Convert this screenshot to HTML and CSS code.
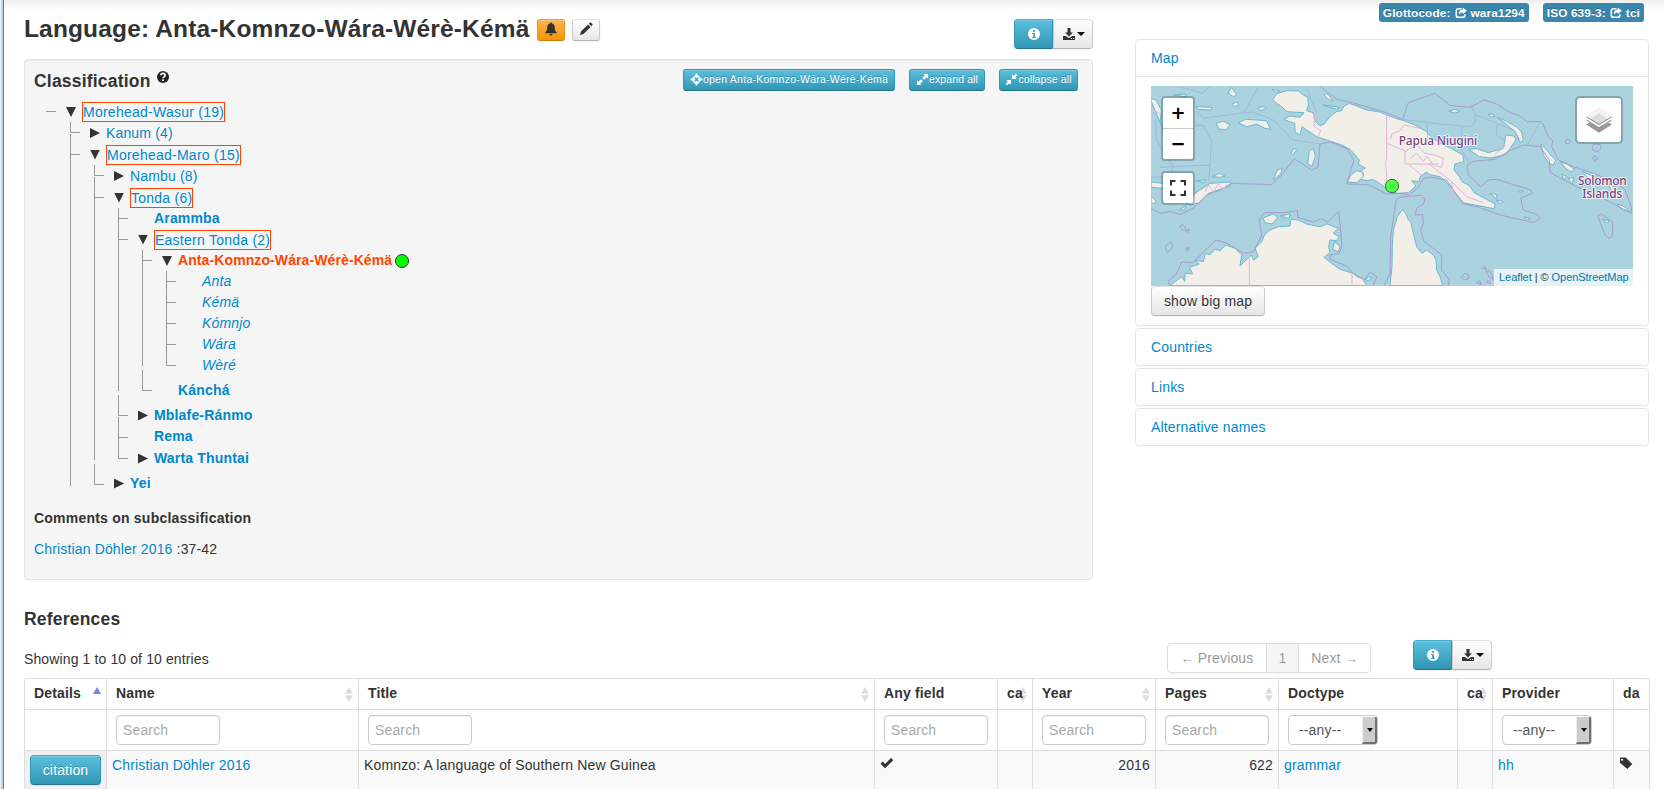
FILE: index.html
```html
<!DOCTYPE html>
<html lang="en">
<head>
<meta charset="utf-8">
<title>Language: Anta-Komnzo-Wára-Wérè-Kémä</title>
<link rel="stylesheet" href="styles.css">
</head>
<body>
<svg width="0" height="0" class="defs">
  <symbol id="i-bell" viewBox="0 0 14 14"><path d="M7 0.5c.7 0 1 .4 1 .9 1.900.5 2.800 2 2.800 4 0 2.600.6 3.800 2 5v.9H1.200v-.9c1.400-1.200 2-2.400 2-5 0-2 .9-3.500 2.800-4 0-.5.3-.9 1-.9zM5.500 12h3c0 1-.6 1.500-1.500 1.500S5.500 13 5.500 12z"/></symbol>
  <symbol id="i-pencil" viewBox="0 0 14 14"><path d="M1 13l1-3.500L9 2.500 11.500 5 4.500 12zM9.800 1.700L11 .6q.5-.4 1 0L13.400 2q.4.500 0 1L12.300 4.200z"/></symbol>
  <symbol id="i-info" viewBox="0 0 14 14"><path fill-rule="evenodd" d="M7 1a6 6 0 1 0 0 12A6 6 0 0 0 7 1zM6 3h2v2H6zM5 6h3v4h1v1H5v-1h1V7H5z"/></symbol>
  <symbol id="i-help" viewBox="0 0 14 14"><circle cx="7" cy="7" r="6"/><path d="M4.900 5.300Q5 3.400 7 3.400T9.100 5.200Q9.100 6.200 8 6.900 7.100 7.400 7.100 8.300" fill="none" stroke="#fff" stroke-width="1.700"/><path fill="#fff" d="M6.200 9.300h1.800v1.800H6.200z"/></symbol>
  <symbol id="i-down" viewBox="0 0 14 14"><path fill-rule="evenodd" d="M5.500 1h3v4.500H11L7 9.500 3 5.500h2.500zM1 9h3l2 1.700h2L10 9h3v4H1zM9 11v1h1v-1zm2 0v1h1v-1z"/></symbol>
  <symbol id="i-target" viewBox="0 0 14 14"><circle cx="7" cy="7" r="3.700" fill="none" stroke="currentColor" stroke-width="1.500"/><path d="M7 0l2 2.700H8V5.500H6V2.700H5zM7 14l2-2.700H8V8.500H6v2.800H5zM0 7l2.700-2v1h2.800v2H2.700v1zM14 7l-2.700-2v1H8.500v2h2.800v1z"/></symbol>
  <symbol id="i-expand" viewBox="0 0 14 14"><path d="M8 1h5v5L11.500 4.500 8.700 7.300 6.700 5.300 9.500 2.500zM6 13H1V8l1.500 1.500L5.300 6.700 7.300 8.700 4.500 11.500z"/></symbol>
  <symbol id="i-collapse" viewBox="0 0 14 14"><path d="M13.300 2.500L11.500.7 9.200 3 7.500 1.300V6.500h5.200L11 4.800zM.7 11.500L2.500 13.300 4.800 11 6.500 12.700V7.500H1.300L3 9.200z"/></symbol>
  <symbol id="i-share" viewBox="0 0 14 14"><path d="M7.500 2H4Q1.500 2 1.500 4.500v5Q1.500 12 4 12h5q2.500 0 2.500-2.500V8.500" fill="none" stroke="currentColor" stroke-width="1.800"/><path d="M9 .5l4.800 4L9 8.500V6Q6 5.800 5 9 3.600 3.500 9 3z"/></symbol>
  <symbol id="i-ok" viewBox="0 0 14 14"><path d="M.5 7.800L2.700 5.600 5 7.900 11 2l2.300 2.200L5 12.300z"/></symbol>
  <symbol id="i-tag" viewBox="0 0 14 14"><path fill-rule="evenodd" d="M1 1.500h5.500L13.300 8 8.300 13 1 6.800zM3 2.800a1 1 0 1 0 .1 0z"/></symbol>
</svg>
<div class="page">
  <div class="top">
    <main class="left">
      <div class="head">
        <h2>Language: Anta-Komnzo-Wára-Wérè-Kémä</h2>
        <a class="btn small warning"><svg class="ic"><use href="#i-bell"/></svg></a>
        <a class="btn small"><svg class="ic"><use href="#i-pencil"/></svg></a>
        <div class="group"><a class="btn info"><svg class="ic"><use href="#i-info"/></svg></a><a class="btn"><svg class="ic"><use href="#i-down"/></svg><i class="caret"></i></a></div>
      </div>
      <section class="well">
        <div class="wellhead">
          <h3>Classification</h3><svg class="ic help"><use href="#i-help"/></svg>
          <div class="mini-row">
            <a class="mini b1"><svg><use href="#i-target"/></svg><span>open Anta-Komnzo-Wára-Wérè-Kémä</span></a>
            <a class="mini b2"><svg><use href="#i-expand"/></svg><span>expand all</span></a>
            <a class="mini b3"><svg><use href="#i-collapse"/></svg><span>collapse all</span></a>
          </div>
        </div>
        <div class="tree">
          <svg class="lines" width="200" height="400" viewBox="25 100 200 400"><path d="M46 111.500h10M70.500 122v10.500h9.500M70.500 134v352M70.500 154.500h9.500M94.500 165v10.500h9.500M94.500 177v283M94.500 197.500h9.500M94.500 464v20.500h9.500M118.500 208v183M118.500 218.500h9.500M118.500 239.500h9.500M118.500 395v20.500h9.500M118.500 417v41.500h9.500M118.500 437.500h9.500M142.500 250v116M142.500 260.500h9.500M142.500 370v20.500h9.500M166.500 271v94.500h9.500M166.500 281.500h9.500M166.500 302.500h9.500M166.500 323.500h9.500M166.500 344.500h9.500"/></svg>
          <div class="r l0 h22"><i class="dn"></i><a class="box">Morehead-Wasur (19)</a></div>
          <div class="r l1 h20"><i class="rt"></i><a>Kanum (4)</a></div>
          <div class="r l1 h23"><i class="dn"></i><a class="box">Morehead-Maro (15)</a></div>
          <div class="r l2 h20"><i class="rt"></i><a>Nambu (8)</a></div>
          <div class="r l2 h23"><i class="dn"></i><a class="box">Tonda (6)</a></div>
          <div class="r l3 h19"><i></i><a class="b">Arammba</a></div>
          <div class="r l3 h23"><i class="dn"></i><a class="box">Eastern Tonda (2)</a></div>
          <div class="r l4 h20"><i class="dn"></i><a class="b cur">Anta-Komnzo-Wára-Wérè-Kémä</a><svg class="dot" viewBox="0 0 14 14"><circle cx="7" cy="7" r="6.500"/></svg></div>
          <div class="r l5"><i></i><a class="it">Anta</a></div>
          <div class="r l5"><i></i><a class="it">Kémä</a></div>
          <div class="r l5"><i></i><a class="it">Kómnjo</a></div>
          <div class="r l5"><i></i><a class="it">Wára</a></div>
          <div class="r l5"><i></i><a class="it">Wèré</a></div>
          <div class="r l4 gap"><i></i><a class="b">Kánchá</a></div>
          <div class="r l3 gap"><i class="rt"></i><a class="b">Mblafe-Ránmo</a></div>
          <div class="r l3 h22"><i></i><a class="b">Rema</a></div>
          <div class="r l3"><i class="rt"></i><a class="b">Warta Thuntai</a></div>
          <div class="r l2 gap"><i class="rt"></i><a class="b">Yei</a></div>
        </div>
        <h4>Comments on subclassification</h4>
        <p><a>Christian Döhler 2016</a> :37-42</p>
      </section>
    </main>
    <aside class="right">
      <div class="labels"><span class="label">Glottocode: <svg><use href="#i-share"/></svg> wara1294</span><span class="label">ISO 639-3: <svg><use href="#i-share"/></svg> tci</span></div>
      <div class="acc"><a class="acch">Map</a>
        <div class="inner">
          <div class="map">
            <svg class="mapsvg" width="482" height="200" viewBox="33 18 1446 600">
              <g class="land">
                <path d="M398 58L412 40 440 32 475 33 490 45 503 52 505 75 500 92 520 98 524 122 540 138 552 132 570 110 590 95 605 92 612 78 628 70 650 78 680 90 720 96 740 105 770 116 792 122 825 135 860 155 875 172 900 190 935 206 968 225 972 245 945 252 942 270 958 290 966 305 990 318 1002 338 1040 358 1066 372 1062 386 1020 378 970 368 955 350 925 312 900 290 870 284 860 276 840 290 838 305 815 302 828 318 805 338 775 340 750 335 722 312 700 299 678 302 660 296 672 282 662 272 676 264 655 252 658 240 630 208 605 195 560 180 530 170 500 150 487 140 480 165 465 155 464 130 430 118 450 108 480 112 492 98 470 97 440 95 425 80 410 70Z"/>
                <path d="M622 306L632 286 650 272 668 276 670 290 650 308Z"/>
                <path d="M90 617L125 590 134 604 136 580 158 582 148 562 178 552 166 540 190 545 196 520 210 524 225 508 240 512 258 495 285 505 305 525 300 558 318 540 335 525 340 540 355 530 345 505 365 485 375 462 390 450 415 440 450 438 452 418 475 420 500 432 540 440 562 432 595 445 580 460 598 470 590 482 570 480 566 500 570 518 552 532 575 550 600 568 640 580 668 596 680 617Z"/>
                <path d="M750 617L756 560 757 500 760 450 772 410 788 388 800 405 805 420 812 425 820 460 830 500 845 520 860 510 880 525 888 540 890 570 900 590 908 617Z"/>
                <path d="M33 55L48 60 64 90 60 125 70 150 33 62ZM33 306L70 310 68 325 33 322ZM33 348L48 362 44 372 33 368ZM140 370L165 340 210 310 272 306 270 318 205 340 178 368 150 375Z"/>
                <path d="M228 130L250 124 270 134 260 148 238 148ZM294 128L318 118 380 122 392 148 375 145 350 132 320 140ZM168 80L215 82 214 90 174 88ZM355 82L372 80 380 86 360 92ZM264 40L275 22 290 45 280 50ZM396 28L420 32 408 38ZM275 72L290 66 298 76 285 80ZM400 300L412 270 426 264 422 282ZM503 252L508 212 520 205 526 230 516 258ZM452 220L462 205 470 210 458 225ZM216 290L238 280 255 288 240 292ZM168 302L198 300 192 308ZM368 414L400 402 414 412 396 432 376 428ZM420 408L450 402 448 416ZM118 390L138 376 134 390ZM100 45L135 42 138 50ZM552 45L560 40 580 62 565 58ZM550 75L598 82 590 88ZM578 508L584 485 600 500 594 515ZM676 598L688 590 694 594 684 603Z"/>
                <path d="M986 208L1010 206 1045 218 1072 210 1090 205 1098 165 1122 168 1128 180 1115 198 1098 224 1050 234 1018 230ZM1072 112L1100 124 1130 142 1144 154 1150 180 1140 188 1126 155 1095 130ZM926 94L945 88 960 94 945 99ZM1045 103L1060 102 1063 111 1050 110ZM1203 192L1215 205 1232 225 1247 240 1240 256 1225 248 1210 225ZM1262 246L1280 252 1304 268 1292 275 1275 264ZM1326 274L1352 286 1370 300 1362 302 1340 290ZM1408 304L1426 330 1418 340 1408 318ZM1430 372L1450 378 1468 394 1450 392ZM1266 282L1280 290 1270 300ZM1284 296L1302 292 1296 312ZM1050 340L1072 344 1068 356ZM1068 360L1090 364 1082 372ZM1134 334L1150 332 1142 338ZM1152 410L1172 416 1162 420ZM1386 418L1408 422 1402 430Z"/>
              </g>
              <g class="eez">
                <path d="M33 386L65 400 90 394 120 404 160 384 200 346 240 330 275 310 395 314 425 285 463 236 515 270 534 262 540 192 572 186 620 206 642 240 620 312 685 314 740 342 780 340 808 345 835 322 850 295 875 292 920 300 950 345 970 372 1010 380 1085 406 1180 428 1202 414 1190 403 1150 390 1142 354 1178 340 1172 330 1070 298 1045 300 1022 320 985 285 982 255 1000 244 1065 238 1110 212 1150 195 1200 200 1228 240 1230 276 1245 286 1310 320 1400 360 1474 400 1474 382 1456 332 1435 310 1360 280 1300 260 1255 240 1235 200 1238 182 1225 170 1205 124 1162 126 1140 108 1110 98 1070 72 1032 60 990 82 930 76 886 40 805 68 788 118 740 98 630 66 590 58 540 18"/>
                <path d="M88 617L86 600 108 584 125 546 158 548 190 516 228 480 262 490 310 520 340 515 365 468 358 420 372 398 430 398 472 392 474 412 520 426 545 416 562 426 596 394 600 430 606 500 598 520 570 525 570 538 620 558 650 590 675 598 690 576 710 590 700 617M732 617L750 580 752 470 768 362 775 352 845 346 855 358 850 372 830 385 826 405 848 404 850 430 842 450 852 484 905 525 905 570 928 600 925 617"/>
                <path d="M76 500L90 485 98 492 96 506 82 517ZM118 440L128 434 138 444 130 452ZM136 452L148 448 142 458ZM138 504h10l-5 10zM1374 410L1384 402 1418 426 1418 465 1408 476 1394 464ZM1356 200L1362 192 1380 194 1384 204 1374 215 1360 211ZM1276 183L1284 177 1292 183 1288 190 1278 190ZM1357 234L1365 227 1373 236 1364 242ZM965 590L973 581 985 583 987 594 974 600ZM1027 565L1034 558 1040 570ZM1010 608L1020 602 1024 614ZM1038 575L1050 572 1060 598 1048 592ZM1038 605L1046 600 1052 612Z"/>
              </g>
              <path class="thin" d="M110 18L188 40 208 20M355 20L312 98 190 115 170 95M165 136H190L214 180 210 255 100 260 50 180 45 120M312 98L340 96 400 120 458 180 520 188 540 192M500 25L528 95M210 255L206 300M788 118L900 132 990 140 1005 128V100L992 75M1005 104L1120 150 1140 180M862 130V180M965 138V210L985 245M965 200H1000M1200 125L1162 195M1072 135L1068 165 1098 185M60 262L100 260 90 290 33 292"/>
              <path class="prov" d="M740 105V235L737 250 742 320M328 520V617M636 580V617M524 100L522 138 542 152 528 185M740 190L795 212V252H895M795 215L830 195 855 220 885 225 910 235 905 262 880 255 860 228 850 245 830 220 810 235M752 178L755 162 780 152 792 135 840 145M808 255L850 290M865 250L935 305 980 350 1030 368M935 305L940 350M1065 222L1100 195M33 85L65 105M195 335L205 315 220 335 235 312 250 328 262 312"/>
              <g class="maplabel"><text x="894" y="195" textLength="236">Papua Niugini</text><text x="1387" y="314" textLength="146">Solomon</text><text x="1387" y="354" textLength="120">Islands</text></g>
              <circle cx="756" cy="318" r="20" class="mark"/>
            </svg>
            <div class="zoomc"><b>+</b><b>−</b></div>
            <div class="full"><svg width="16" height="16" viewBox="0 0 16 16"><path d="M1 5.500V1h4.500M10.500 1H15v4.500M15 10.500V15h-4.500M5.500 15H1v-4.500"/></svg></div>
            <div class="layers"><svg width="26" height="26" viewBox="0 0 26 26"><path fill="#9a9a9a" d="M0 17.500l13 8.300 13-8.300-3.500-2L13 21l-9.500-5.500z"/><path fill="#898989" d="M0 13.300l13 8.200 13-8.200-3-2-10 6-10-6z"/><path fill="#fff" d="M0 12.300l13 8 13-8-2-1.500L13 17 2 10.800z"/><path fill="#808080" d="M0 10l13 8 13-8-13-8z"/><path fill="#ddd" d="M0 9l13 8 13-8L13 1z"/><path fill="#f2f2f2" d="M0 9l13-8 13 8-5 3-8-6-8 6z"/></svg></div>
            <div class="attr"><a>Leaflet</a> | © <a>OpenStreetMap</a></div>
          </div>
          <a class="btn big">show big map</a>
        </div>
      </div>
      <div class="acc"><a class="acch">Countries</a></div>
      <div class="acc"><a class="acch">Links</a></div>
      <div class="acc"><a class="acch">Alternative names</a></div>
    </aside>
  </div>
  <h3 class="refs">References</h3>
  <div class="bar">
    <div class="showing">Showing 1 to 10 of 10 entries</div>
    <div class="pag"><span><i class="ar">←</i> Previous</span><span class="act">1</span><span>Next <i class="ar">→</i></span></div>
    <div class="group g2"><a class="btn info"><svg class="ic"><use href="#i-info"/></svg></a><a class="btn"><svg class="ic"><use href="#i-down"/></svg><i class="caret"></i></a></div>
  </div>
  <table>
    <colgroup><col class="c82"><col class="c252"><col class="c516"><col class="c123"><col class="c35"><col class="c123"><col class="c123"><col class="c179"><col class="c35"><col class="c121"><col class="c36"></colgroup>
    <thead>
      <tr class="names"><th>Details<i class="asc"></i></th><th>Name<i class="sort"></i></th><th>Title<i class="sort"></i></th><th>Any field</th><th>ca<i class="sort"></i></th><th>Year<i class="sort"></i></th><th>Pages<i class="sort"></i></th><th>Doctype</th><th>ca<i class="sort"></i></th><th>Provider</th><th>da</th></tr>
      <tr class="filters"><td></td><td><div class="inp">Search</div></td><td><div class="inp">Search</div></td><td><div class="inp">Search</div></td><td></td><td><div class="inp">Search</div></td><td><div class="inp">Search</div></td><td><div class="sel">--any--<i></i></div></td><td></td><td><div class="sel">--any--<i></i></div></td><td></td></tr>
    </thead>
    <tbody>
      <tr><td class="sorted"><a class="btn info cit">citation</a></td><td><a>Christian Döhler 2016</a></td><td>Komnzo: A language of Southern New Guinea</td><td><svg class="ic"><use href="#i-ok"/></svg></td><td></td><td class="num">2016</td><td class="num">622</td><td><a>grammar</a></td><td></td><td><a>hh</a></td><td><svg class="ic"><use href="#i-tag"/></svg></td></tr>
    </tbody>
  </table>
</div>
</body>
</html>
```
FILE: styles.css
```css
* { box-sizing: border-box; }
html { height: 100%; overflow: hidden; }
body { margin: 0; height: 789px; overflow: hidden; font: 14px/20px "Liberation Sans", Arial, sans-serif; letter-spacing: .15px; color: #333; background: #fff; }
.defs { position: absolute; }
a { color: #08c; }
h2, h3, h4, p { margin: 0; }
i { font-style: normal; }
svg { fill: currentColor; }
.page { height: 789px; overflow: hidden; padding: 0 14px 0 24px; background: linear-gradient(to right, #f0f3f6 0 1px, #bdd3e6 1px 3px, #5f7c99 3px) 0 0 / 4px 100% no-repeat, linear-gradient(#efefef, #fff 10px); }
.top { display: flex; gap: 42px; height: 580px; }
.left { width: 1069px; }
.right { width: 514px; }
.head { display: flex; height: 59px; padding-top: 19px; align-items: flex-start; }
h2 { font-size: 24.500px; line-height: 40px; margin: -10px 8px 0 0; width: 505px; white-space: nowrap; }
.btn { display: inline-flex; align-items: center; justify-content: center; height: 30px; border: 1px solid #ccc; border-color: #e0e0e0 #ccc #b3b3b3; border-radius: 4px; background: linear-gradient(#fff, #e6e6e6); color: #333; text-shadow: 0 1px 1px rgba(255,255,255,.75); box-shadow: inset 0 1px 0 rgba(255,255,255,.2), 0 1px 2px rgba(0,0,0,.05); }
.ic { width: 14px; height: 14px; }
.small { width: 28px; height: 22px; border-radius: 3px; margin-right: 7px; }
.small .ic { margin-top: -2px; }
.warning { background: linear-gradient(#fbb450, #f89406); border-color: #f0a030 #e8950f #d37e05; }
.info { color: #fff; background: linear-gradient(#5bc0de, #2f96b4); border-color: #46a9c7 #2f96b4 #24748c; text-shadow: 0 -1px 0 rgba(0,0,0,.25); }
.group { display: flex; margin-left: auto; }
.group .info { width: 39px; border-radius: 4px 0 0 4px; }
.group .info .ic { margin-top: -1px; }
.group .btn + .btn { width: 40px; border-radius: 0 4px 4px 0; }
.caret { border: 4px solid transparent; border-top-color: #000; border-bottom: 0; margin-left: 1px; }
.well { height: 521px; background: #f5f5f5; border: 1px solid #e3e3e3; border-radius: 4px; padding: 9px; box-shadow: inset 0 1px 1px rgba(0,0,0,.05); }
.wellhead { display: flex; height: 32px; }
h3 { font-size: 17.500px; line-height: 24px; letter-spacing: .2px; }
.help { margin: 1px 0 0 5px; color: #222; }
.mini-row { display: flex; margin-left: auto; padding-right: 5px; gap: 14px; }
.mini { display: flex; align-items: center; justify-content: center; height: 22px; color: #fff; font-size: 10.500px; border: 1px solid #2f96b4; border-bottom-color: #24748c; border-radius: 3px; background: linear-gradient(#5bc0de, #2f96b4); text-shadow: 0 -1px 0 rgba(0,0,0,.25); white-space: nowrap; box-shadow: inset 0 1px 0 rgba(255,255,255,.2); }
.mini svg { width: 13px; height: 13px; flex: none; margin-top: -1px; }
.mini span { margin-top: -2px; }
.b1 { width: 212px; } .b2 { width: 76px; } .b3 { width: 79px; }
.b1 span { letter-spacing: .25px; }
.b2 span, .b3 span { letter-spacing: .1px; }
.tree { position: relative; margin: 0 0 0 -9px; height: 407px; }
.lines { position: absolute; left: 0; top: -1px; fill: none; stroke: #999; }
.r { display: flex; align-items: center; height: 21px; position: relative; }
.h19 { height: 19px; } .h20 { height: 20px; } .h22 { height: 22px; } .h23 { height: 23px; }
.gap { height: 25px; padding-top: 4px; }
.r i { width: 16px; flex: none; }
.r .dn::before { content: ""; display: block; width: 10px; height: 10px; background: #333; clip-path: polygon(0 0, 100% 0, 50% 100%); }
.r .rt::before { content: ""; display: block; width: 10px; height: 10px; background: #333; clip-path: polygon(0 0, 100% 50%, 0 100%); }
.l0 { padding-left: 41px; } .l1 { padding-left: 65px; } .l2 { padding-left: 89px; } .l3 { padding-left: 113px; } .l4 { padding-left: 137px; } .l5 { padding-left: 161px; }
.r a { line-height: 18px; }
.r .b, .r .it { margin-top: -2px; }
.r .box { border: 1px solid #ff4500; height: 20px; letter-spacing: .25px; }
.b { font-weight: bold; letter-spacing: .17px; }
.r .cur { color: #ff4500; letter-spacing: .1px; }
.it { font-style: italic; }
.dot { width: 14px; height: 14px; margin-left: 3px; margin-top: -1px; fill: #0f0; stroke: #333; }
h4 { font-size: 14px; line-height: 20px; margin-bottom: 11px; letter-spacing: .22px; }
.labels { display: flex; justify-content: flex-end; gap: 14px; height: 39px; padding: 3px 5px 17px 0; }
.label { display: flex; align-items: center; gap: 4px; height: 19px; padding: 0 4px; border-radius: 3px; background: #3a87ad; color: #fff; font-weight: bold; font-size: 11.844px; letter-spacing: .12px; white-space: nowrap; text-shadow: 0 -1px 0 rgba(0,0,0,.25); }
.label svg { width: 12px; height: 12px; }
.acc { border: 1px solid #e5e5e5; border-radius: 4px; margin-bottom: 2px; }
.acch { display: block; padding: 8px 15px; height: 36px; }
.inner { border-top: 1px solid #e5e5e5; padding: 9px 15px; height: 249px; }
.map { position: relative; width: 482px; height: 200px; background: #aad3df; overflow: hidden; letter-spacing: 0; }
.mapsvg { display: block; }
.land { fill: #f2efe9; stroke: #6db9cf; stroke-width: 3; stroke-linejoin: round; }
.eez { fill: none; stroke: #a99ace; stroke-width: 3; stroke-linejoin: round; }
.thin { fill: none; stroke: #9aa9d4; stroke-width: 2; }
.prov { fill: none; stroke: #dfb5d8; stroke-width: 3; }
.maplabel { font: 500 36px "Noto Sans", sans-serif; fill: #7b4282; stroke: #fff; stroke-opacity: .75; stroke-width: 6px; paint-order: stroke; text-anchor: middle; }
.mark { fill: #4aff42; stroke: #3f6f3c; stroke-width: 3; }
.zoomc, .full, .layers { position: absolute; background: #fff; background-clip: padding-box; border: 2px solid rgba(0,0,0,.22); border-radius: 4px; }
.zoomc { left: 10px; top: 10px; width: 34px; height: 65px; color: #000; text-align: center; }
.zoomc b { display: block; height: 30px; font: bold 18px/30px "DejaVu Sans", sans-serif; }
.zoomc b + b { height: 31px; border-top: 1px solid #ccc; }
.full { left: 10px; top: 85px; width: 34px; height: 34px; padding: 7px; }
.full svg { display: block; fill: none; stroke: #333; stroke-width: 2; }
.layers { right: 10px; top: 10px; width: 48px; height: 48px; padding: 9px; border-radius: 5px; }
.layers svg { display: block; }
.attr { position: absolute; right: 0; bottom: 0; width: 139px; height: 17px; padding: 0 5px; font-size: 11px; line-height: 16px; letter-spacing: -.05px; background: rgba(255,255,255,.7); white-space: nowrap; }
.attr a { color: #0078a8; }
.big { width: 114px; }
.refs { margin: 27px 0 0; line-height: 24px; }
.bar { display: flex; height: 47px; }
.showing { width: 1143px; padding-top: 18px; letter-spacing: .12px; }
.pag { display: flex; width: 204px; height: 30px; margin: 12px 42px 0 0; border: 1px solid #ddd; border-radius: 4px; color: #999; box-shadow: 0 1px 2px rgba(0,0,0,.05); text-align: center; line-height: 28px; white-space: nowrap; }
.pag span { width: 71px; }
.pag span:first-child { width: 98px; }
.pag .act { width: 33px; background: #f5f5f5; border: solid #ddd; border-width: 0 1px; }
.ar { font-size: 13px; }
.g2 { margin: 9px 0 0; }
table { table-layout: fixed; width: 1626px; border-collapse: separate; border-spacing: 0; border: 1px solid #ddd; border-left: 0; border-radius: 4px; }
th, td { border-left: 1px solid #ddd; padding: 0 5px; text-align: left; vertical-align: top; overflow: hidden; }
th:first-child { border-top-left-radius: 4px; }
.c82 { width: 82px; } .c252 { width: 252px; } .c516 { width: 516px; } .c123 { width: 123px; } .c35 { width: 35px; } .c179 { width: 179px; } .c121 { width: 121px; } .c36 { width: 36px; }
.names th { position: relative; isolation: isolate; height: 30px; line-height: 29px; padding: 0 0 0 9px; white-space: nowrap; }
.sort, .asc { position: absolute; right: 5px; top: 8px; width: 8px; height: 15px; background: #ddd; clip-path: polygon(50% 0, 100% 45%, 0 45%, 0 55%, 100% 55%, 50% 100%, 0 55%, 0 45%); z-index: -1; }
.asc { height: 7px; background: #7b7fe0; clip-path: polygon(50% 0, 100% 100%, 0 100%); }
.filters td { height: 41px; border-top: 1px solid #ddd; padding: 5px 9px 0; }
.inp { width: 104px; height: 30px; border: 1px solid #ccc; border-radius: 4px; padding: 0 6px; line-height: 28px; color: #aaa; box-shadow: inset 0 1px 1px rgba(0,0,0,.075); }
.sel { position: relative; width: 90px; height: 30px; border: 1px solid #ccc; border-radius: 4px; padding-left: 10px; line-height: 28px; color: #555; overflow: hidden; }
.sel i { position: absolute; right: 0; top: 1px; width: 15px; height: 27px; background: #ccc; border: solid #707070; border-width: 0 2px 2px 0; border-left: 1px solid #eee; }
.sel i::after { content: ""; position: absolute; left: 4px; top: 11px; border: 3px solid transparent; border-top: 4px solid #000; border-bottom: 0; }
tbody td { height: 60px; border-top: 1px solid #ddd; padding-top: 4px; background: #f9f9f9; }
tbody .sorted { background: #f0f0f0; }
.cit { width: 71px; }
.num { text-align: right; padding-right: 5px; }
```
